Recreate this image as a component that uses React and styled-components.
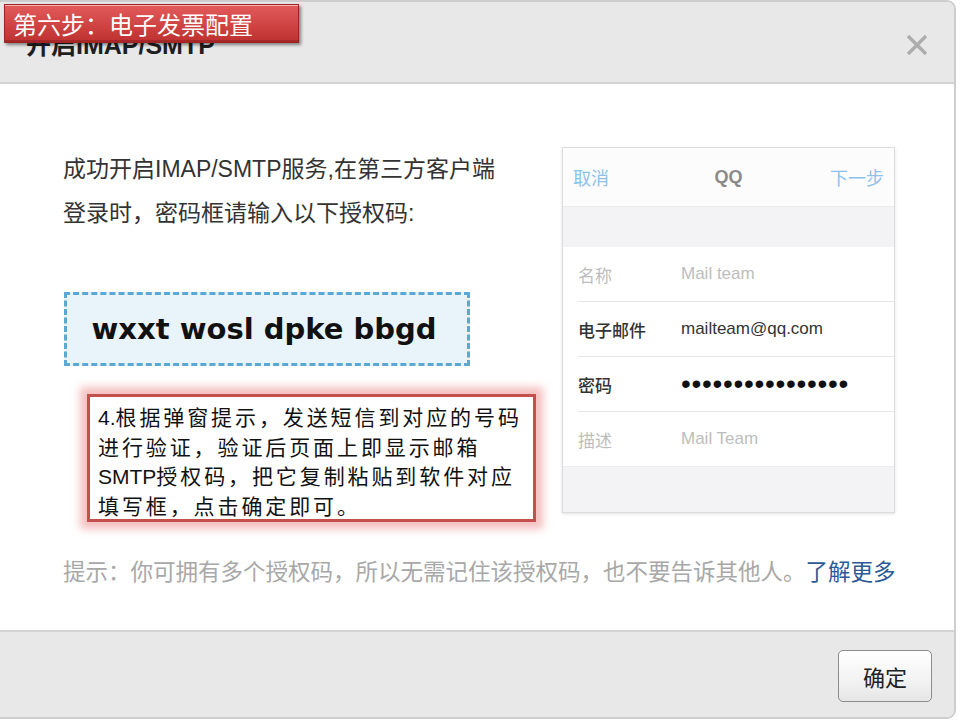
import React from 'react';
import styled, { createGlobalStyle } from 'styled-components';

const GlobalStyle = createGlobalStyle`
  html, body {
    margin: 0;
    padding: 0;
    background: #ffffff;
    overflow: hidden;
  }
  body {
    font-family: "Liberation Sans", "Noto Sans CJK SC", sans-serif;
    color: #333;
  }
`;

const rows = [
  { label: '名称', value: 'Mail team', muted: true },
  { label: '电子邮件', value: 'mailteam@qq.com' },
  { label: '密码', value: '••••••••••••••••', dots: true },
  { label: '描述', value: 'Mail Team', muted: true },
];

const App = () => {
  return (
    <>
      <GlobalStyle />
      <Dialog>
        <StepBanner>第六步：电子发票配置</StepBanner>
        <Header>
          <Title>开启IMAP/SMTP</Title>
          <CloseButton aria-label='close'>
            <svg width='22' height='22' viewBox='0 0 22 22'>
              <path d='M2 2 L20 20 M20 2 L2 20' stroke='#acacac' strokeWidth='3.2' strokeLinecap='butt' />
            </svg>
          </CloseButton>
        </Header>

        <Body>
          <TopRow>
            <LeftColumn>
              <Intro>
                成功开启IMAP/SMTP服务,在第三方客户端
                <br />
                登录时，密码框请输入以下授权码:
              </Intro>
              <CodeBox>wxxt wosl dpke bbgd</CodeBox>
              <NoteBox>
                <Latin>4.</Latin>根据弹窗提示，发送短信到对应的号码
                <br />
                进行验证，验证后页面上即显示邮箱
                <br />
                <Latin>SMTP</Latin>授权码，把它复制粘贴到软件对应
                <br />
                填写框，点击确定即可。
              </NoteBox>
            </LeftColumn>

            <PhonePanel>
              <PhoneBar>
                <BarLink>取消</BarLink>
                <BarTitle>QQ</BarTitle>
                <BarLink $right>下一步</BarLink>
              </PhoneBar>
              <GrayBand $h={40} />
              <RowList>
                {rows.map((r) => (
                  <FormRow key={r.label}>
                    <FieldLabel $muted={r.muted}>{r.label}</FieldLabel>
                    {r.dots ? <Dots>{r.value}</Dots> : <FieldValue $muted={r.muted}>{r.value}</FieldValue>}
                  </FormRow>
                ))}
              </RowList>
              <GrayBand $h={45} />
            </PhonePanel>
          </TopRow>

          <Hint>
            提示：你可拥有多个授权码，所以无需记住该授权码，也不要告诉其他人。<MoreLink>了解更多</MoreLink>
          </Hint>
        </Body>

        <Footer>
          <ConfirmButton>确定</ConfirmButton>
        </Footer>
      </Dialog>
    </>
  );
};

const Dialog = styled.div`
  position: relative;
  box-sizing: border-box;
  width: 958px;
  height: 719px;
  margin-left: -2px;
  border: 2px solid #cdcdcd;
  border-radius: 0 9px 9px 0;
  overflow: hidden;
  display: flex;
  flex-direction: column;
  background: #fff;
`;

const StepBanner = styled.div`
  position: absolute;
  left: 4px;
  top: 2px;
  box-sizing: border-box;
  width: 295px;
  height: 39px;
  padding-left: 8px;
  line-height: 37px;
  font-family: "Noto Sans CJK SC", sans-serif;
  font-size: 24px;
  color: #fff;
  background: linear-gradient(#e35b5b, #cf4343 55%, #bd3131);
  border: 1px solid #9e2424;
  box-shadow: inset 0 1px 0 rgba(255, 200, 200, 0.8), inset 0 -2px 0 rgba(120, 20, 20, 0.35),
    2px 2px 3px rgba(0, 0, 0, 0.45);
  z-index: 2;
`;

const Header = styled.div`
  height: 80px;
  flex: none;
  display: flex;
  align-items: center;
  justify-content: space-between;
  padding: 0 26px 0 26px;
  background: #e8e8e8;
  border-bottom: 2px solid #d3d3d3;
`;

const Title = styled.div`
  font-family: "Liberation Sans", "Noto Sans CJK SC", sans-serif;
  font-weight: bold;
  font-size: 25px;
  color: #1f1f1f;
  padding-top: 2px;
`;

const CloseButton = styled.div`
  width: 22px;
  height: 22px;
  margin-top: 6px;
  display: flex;
`;

const Body = styled.div`
  flex: 1;
  padding: 63px 0 0 63px;
`;

const TopRow = styled.div`
  display: flex;
  align-items: flex-start;
`;

const LeftColumn = styled.div`
  width: 499px;
  flex: none;
`;

const Intro = styled.p`
  margin: 0;
  font-size: 23px;
  line-height: 44px;
  color: #333;
`;

const CodeBox = styled.div`
  box-sizing: border-box;
  width: 406px;
  height: 74px;
  margin: 57px 0 0 1px;
  padding-right: 6px;
  border: 3px dashed #5aa9d4;
  background: #e8f3fa;
  display: flex;
  align-items: center;
  justify-content: center;
  font-family: "DejaVu Sans", sans-serif;
  font-weight: bold;
  font-size: 29px;
  color: #111;
`;

const NoteBox = styled.div`
  box-sizing: border-box;
  width: 449px;
  height: 128px;
  margin: 28px 0 0 24px;
  padding: 5px 0 0 8px;
  border: 3px solid #c4504e;
  background: #fff;
  box-shadow: 0 0 8px 7px rgba(238, 150, 150, 0.6);
  font-family: "Noto Sans CJK SC", sans-serif;
  font-size: 21px;
  letter-spacing: 2.9px;
  line-height: 29px;
  color: #111;
  white-space: nowrap;
`;

const Latin = styled.span`
  font-family: "Liberation Sans", sans-serif;
  letter-spacing: 0;
`;

const PhonePanel = styled.div`
  width: 331px;
  flex: none;
  border: 1px solid #dcdcdc;
  box-shadow: 0 1px 3px rgba(0, 0, 0, 0.12);
  background: #fff;
  display: flex;
  flex-direction: column;
`;

const PhoneBar = styled.div`
  height: 58px;
  display: grid;
  grid-template-columns: 1fr auto 1fr;
  align-items: center;
  padding: 0 10px;
  font-family: "Noto Sans CJK SC", sans-serif;
  font-size: 18px;
  background: #fcfcfc;
`;

const BarLink = styled.span`
  color: #8cc2ea;
  text-align: ${(p) => (p.$right ? 'right' : 'left')};
`;

const BarTitle = styled.span`
  color: #8a8a8a;
  font-family: "Liberation Sans", sans-serif;
  font-weight: bold;
`;

const GrayBand = styled.div`
  height: ${(p) => p.$h}px;
  background: #f3f3f5;
  border-top: 1px solid #ececec;
`;

const RowList = styled.div`
  background: #fff;
`;

const FormRow = styled.div`
  height: 54px;
  margin-left: 15px;
  display: flex;
  align-items: center;
  border-bottom: 1px solid #e6e6e6;
  &:last-child {
    border-bottom: none;
  }
`;

const FieldLabel = styled.span`
  width: 103px;
  font-family: "Noto Sans CJK SC", sans-serif;
  font-size: 17px;
  font-weight: ${(p) => (p.$muted ? 400 : 500)};
  color: ${(p) => (p.$muted ? '#bdbdbd' : '#333')};
`;

const FieldValue = styled.span`
  font-family: "Liberation Sans", sans-serif;
  font-size: 17px;
  color: ${(p) => (p.$muted ? '#bdbdbd' : '#333')};
`;

const Dots = styled.span`
  font-family: "Liberation Sans", sans-serif;
  font-size: 28px;
  letter-spacing: 0.7px;
  color: #111;
  line-height: 1;
`;

const Hint = styled.p`
  margin: 32px 0 0 0;
  font-family: "Noto Sans CJK SC", sans-serif;
  font-size: 22.5px;
  line-height: 32px;
  color: #a8a8a8;
  white-space: nowrap;
`;

const MoreLink = styled.span`
  color: #2b5a96;
`;

const Footer = styled.div`
  height: 85px;
  flex: none;
  display: flex;
  align-items: center;
  justify-content: flex-end;
  padding-right: 22px;
  background: #e8e8e8;
  border-top: 2px solid #d3d3d3;
`;

const ConfirmButton = styled.div`
  box-sizing: border-box;
  width: 94px;
  height: 52px;
  margin-top: 3px;
  display: flex;
  align-items: center;
  justify-content: center;
  border: 1px solid #8c8c8c;
  border-radius: 5px;
  background: linear-gradient(#ffffff, #f2f2f2 60%, #e6e6e6);
  font-family: "Noto Sans CJK SC", sans-serif;
  font-size: 22px;
  color: #222;
`;

export default App;
